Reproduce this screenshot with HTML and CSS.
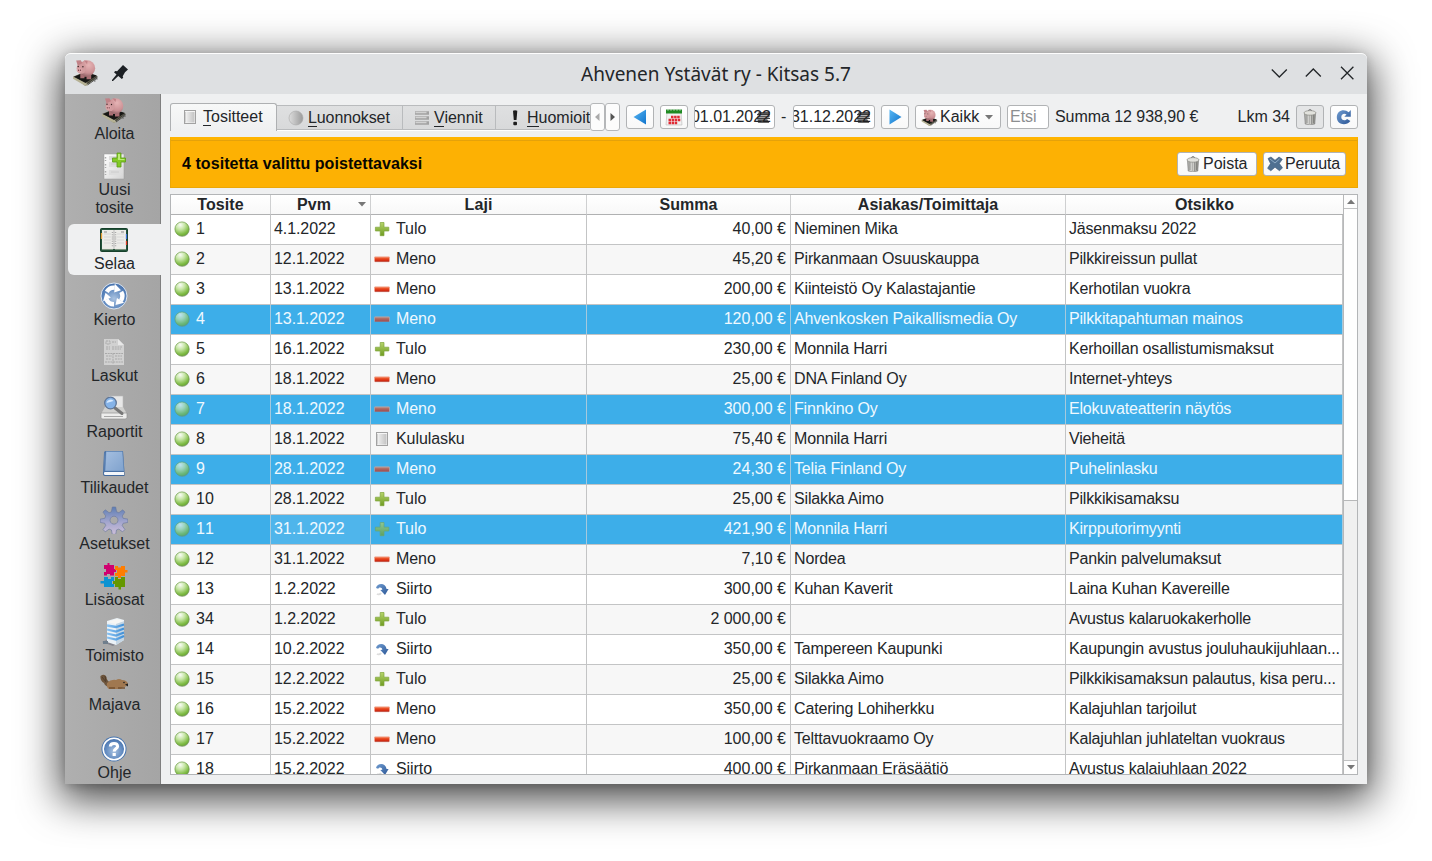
FILE: index.html
```
<!DOCTYPE html>
<html lang="fi">
<head>
<meta charset="utf-8">
<title>Ahvenen Ystävät ry - Kitsas 5.7</title>
<link rel="stylesheet" href="styles.css">
</head>
<body>
<svg class="defs" width="0" height="0">
  <defs>
    <radialGradient id="gBall" cx=".38" cy=".22" r=".8"><stop offset="0" stop-color="#fafdf6"/><stop offset=".4" stop-color="#c5e5a4"/><stop offset=".8" stop-color="#80bc46"/><stop offset="1" stop-color="#6aa832"/></radialGradient>
    <linearGradient id="gPlus" x2="0" y2="1"><stop offset="0" stop-color="#b5d46b"/><stop offset="1" stop-color="#6f9c22"/></linearGradient>
    <linearGradient id="gMinus" x2="0" y2="1"><stop offset="0" stop-color="#f4906a"/><stop offset=".4" stop-color="#ea4a20"/><stop offset="1" stop-color="#c81e0c"/></linearGradient>
    <linearGradient id="gSwap" x2="1" y2="1"><stop offset="0" stop-color="#6f9bd0"/><stop offset="1" stop-color="#2c5796"/></linearGradient>
    <linearGradient id="gPage" x2="1" y2="1"><stop offset="0" stop-color="#fff"/><stop offset="1" stop-color="#d4d4d4"/></linearGradient>
    <radialGradient id="gPig" cx=".6" cy=".3" r=".75"><stop offset="0" stop-color="#e6b4b5"/><stop offset=".65" stop-color="#cb9094"/><stop offset="1" stop-color="#8d6064"/></radialGradient>
    <radialGradient id="gBlue" cx=".5" cy=".6" r=".6"><stop offset="0" stop-color="#a9c2e0"/><stop offset=".7" stop-color="#5c86bd"/><stop offset="1" stop-color="#416ca8"/></radialGradient>
    <linearGradient id="gGear" x2="0" y2="1"><stop offset="0" stop-color="#5e7eb4"/><stop offset=".6" stop-color="#a9a9cf"/><stop offset="1" stop-color="#cdbfd8"/></linearGradient>
    <linearGradient id="gArrow" x2="1" y2="1"><stop offset="0" stop-color="#58b7f3"/><stop offset="1" stop-color="#0f73cc"/></linearGradient>
    <linearGradient id="gCan" x2="1" y2="0"><stop offset="0" stop-color="#9c9c98"/><stop offset=".4" stop-color="#eeeeea"/><stop offset="1" stop-color="#85857f"/></linearGradient>
    <linearGradient id="gGrey" x2="1" y2="0"><stop offset="0" stop-color="#ddd"/><stop offset="1" stop-color="#9a9a9a"/></linearGradient>
    <linearGradient id="gBook" x2="1" y2="1"><stop offset="0" stop-color="#a5bfe0"/><stop offset="1" stop-color="#7fa2cd"/></linearGradient>
    <linearGradient id="gTower" x2="1" y2="0"><stop offset="0" stop-color="#8bc3f2"/><stop offset="1" stop-color="#3f8ed6"/></linearGradient>
  </defs>
  <symbol id="ball" viewBox="0 0 16 16"><ellipse cx="8.5" cy="8.8" rx="7" ry="7" fill="#777" opacity=".5"/><circle cx="8" cy="8" r="7.100" fill="url(#gBall)" stroke="#6c9c46" stroke-width=".7"/></symbol>
  <symbol id="plus" viewBox="0 0 16 16"><path d="M6.2 1.5h3.8v4.700h4.800v3.800h-4.800v4.700h-3.800v-4.700h-4.800v-3.800h4.800z" fill="url(#gPlus)" stroke="#7fa53b" stroke-width=".7"/></symbol>
  <symbol id="minus" viewBox="0 0 16 16"><rect x=".5" y="5.800" width="15" height="4.700" rx=".5" fill="url(#gMinus)" stroke="#f0a898" stroke-width=".6"/><path d="M1 10.600h14" stroke="#a82010" stroke-width=".6"/></symbol>
  <symbol id="swap" viewBox="0 0 16 16"><path d="M3 13c1 .6 3 .5 4-1" stroke="#ddd" stroke-width="2" fill="none"/><path d="M2 7C3 2 11.500 1 12.600 8h2L11 14 6.300 9l2-.3C8.200 6 5 5.600 4.200 7.800z" fill="url(#gSwap)"/></symbol>
  <symbol id="doc" viewBox="0 0 16 16"><rect x="2.500" y="1.500" width="11" height="13" fill="#f6f6f6" stroke="#a2a2a2"/><path d="M5 3h7.500v10.500H5z" fill="url(#gGrey)" opacity=".55"/><path d="M3.700 3v10.500" stroke="#bbb" stroke-width=".8"/></symbol>
  <symbol id="pig" viewBox="0 0 26 26">
    <path d="M1 17 13 12l12 5-12 9z" fill="#605e4c"/><path d="M1 17v2l12 7 2-1v-2z" fill="#b5b194"/><path d="M2 17l11-4.500L24 16l-11 7z" fill="#171715"/><path d="M14 24l10-7M15 25l9-6.500" stroke="#34342e" stroke-width=".8"/><path d="M22 18v4M24 17v3" stroke="#555" stroke-width=".8"/>
    <path d="M8 14v4.500h4V17h2v2.500h4.500V14z" fill="#a96f74"/>
    <ellipse cx="14.500" cy="9" rx="7.800" ry="7.800" fill="url(#gPig)"/><ellipse cx="9" cy="9" rx="4.500" ry="5.300" fill="#d29b9e"/>
    <path d="M4 1.500l4.500-.3 1.500 3-4.500 2zM11.500 1.200l3.500.8-.5 3z" fill="#c18287"/><ellipse cx="7.200" cy="10.800" rx="2.600" ry="2.200" fill="#dca6a9"/><circle cx="6.300" cy="10.800" r=".6" fill="#653038"/><circle cx="8.200" cy="10.800" r=".6" fill="#653038"/><circle cx="6" cy="7.300" r=".7" fill="#302020"/><circle cx="10.500" cy="7.500" r=".7" fill="#302020"/>
  </symbol>
  <symbol id="newdoc" viewBox="0 0 26 28"><path d="M3 2h20v25H3z" fill="url(#gPage)" stroke="#999" stroke-width=".5"/><path d="M4.500 5v4m0 3v4m0 3v4" stroke="#aaa" stroke-width="1.500" stroke-dasharray="1.500 1.500"/><path d="M8 4h8v4H8zM8 10h10v5H8zM8 18h12v5H8z" fill="#ddd"/><path d="M10 6h6M10 12h6M10 20h8" stroke="#ccc"/><path d="M16 1h4v5h4.500v4H20v5h-4v-5h-4.500V6H16z" fill="#83ca27" stroke="#5b9b18" stroke-width=".8"/><path d="M17 2h2v5h4.500v1H17z" fill="#bdec77"/></symbol>
  <symbol id="ledger" viewBox="0 0 28 26"><rect x=".5" y="1.500" width="27" height="23" rx="1" fill="#24543c" stroke="#16402b"/><path d="M2 3h24v19H2z" fill="#ecece8"/><path d="M14 3v19" stroke="#bbb"/><path d="M12.500 5v15M15.500 5v15" stroke="#aaa" stroke-width="1.500" stroke-dasharray="1 1.200"/><path d="M4 7h7M4 10h7M4 13h7M4 16h7M17 7h7M17 10h7M17 13h7M17 16h7" stroke="#d2d2d2" stroke-width=".8"/><path d="M4 5h3M21 5h3" stroke="#888"/><path d="M1.500 6v6" stroke="#e8a13a" stroke-width="1.300"/><path d="M26.500 7v5" stroke="#3d72d6" stroke-width="1.300"/><path d="M26.500 14v4" stroke="#e13b26" stroke-width="1.300"/><path d="M2 22.300h11M15 22.300h11" stroke="#d8d8c8" stroke-width=".6"/></symbol>
  <symbol id="cycle" viewBox="0 0 28 28"><circle cx="14" cy="14" r="13" fill="url(#gBlue)" stroke="#dce5f0" stroke-width="1"/><g id="arm"><path d="M6.800 9.850A8.300 8.300 0 0 1 14.700 5.700" fill="none" stroke="#fff" stroke-width="4.400"/><path d="M14.800 1.800l6.200 6.400-6.800 2.300z" fill="#fff"/></g><use href="#arm" transform="rotate(120 14 14)"/><use href="#arm" transform="rotate(240 14 14)"/></symbol>
  <symbol id="invoice" viewBox="0 0 26 28"><path d="M3 1h14l6 6v20H3z" fill="#d1d1d1"/><path d="M17 1l6 6h-6z" fill="#e7e7e7"/><path d="M5 3h4v3H5zM11 4h4M5 9h4M11 9h10M11 11h9M5 11h4M4 15.500h18M12 15.500V26M5 18h6M14 18h7M5 21h5M14 21h7M4 24h18" stroke="#a9a9a9" fill="none" stroke-dasharray="2 .7"/></symbol>
  <symbol id="report" viewBox="0 0 28 28"><path d="M9 2h14v13H7z" fill="#e7e7e7" stroke="#bbb" stroke-width=".6"/><path d="M5 13h18l4 7v4H1v-4z" fill="#d1d1cf"/><path d="M1 19h26v5q-1 1-2 1H3q-2 0-2-1z" fill="#ededec" stroke="#929292" stroke-width=".7"/><path d="M4 22.500h19" stroke="#a8a8a8"/><path d="M15 14l7 5.500" stroke="#777" stroke-width="3" stroke-linecap="round"/><circle cx="10.500" cy="9" r="5.800" fill="#85b3e8" stroke="#5f7697" stroke-width="1.300"/><path d="M6.500 9a4 4 0 0 1 7-2" fill="#d8eaff"/></symbol>
  <symbol id="book" viewBox="0 0 26 28"><path d="M3 3q0-2 2-2h17l1.500 22v3H4q-2 0-2-2z" fill="#41699e"/><path d="M5 1.500h16.500L23 21H4z" fill="url(#gBook)" stroke="#6288b9" stroke-width=".5"/><path d="M3.500 22H23v3H4q-2-1-.5-3z" fill="#f3f6fa"/><path d="M3.800 2.500L3 22" stroke="#5d83b4"/></symbol>
  <symbol id="gear" viewBox="0 0 28 28"><g fill="url(#gGear)" stroke="#66759c" stroke-width=".6"><path d="M12.300 1h3.400l.9 4.800 2.300.9 3.800-2.900 2.200 2.300-2.700 3.900.9 2.300 4.700.8v3.300l-4.700.9-.9 2.300 2.700 3.900-2.300 2.300-3.800-2.700-2.300.9-.8 4.300h-3.400l-.9-4.300-2.300-.9-3.800 2.700-2.300-2.300 2.700-3.900-.9-2.300-4.600-.9v-3.300l4.600-.8.9-2.300L3 6.100l2.300-2.300 3.800 2.900 2.300-.9zM14 10.200a4 4 0 1 0 .01 0z" fill-rule="evenodd"/></g></symbol>
  <symbol id="puzzle" viewBox="0 0 28 28"><path d="M4 3h3.500V1h2v2H14v4h2v3h-2v3.500h-4V12H7v1.500H4V10h2V7H4z" fill="#d0006f"/><path d="M15 4h3v1.500h3V4h4v4h2.500v2.500H25V14h-4v2h-3v-2h-3v-3h2V8h-2z" fill="#ff7d00"/><path d="M4 15h4v2h3v-2h3v4h-2v3h2v3H4v-3.500H.5V19H4z" fill="#0b93d2"/><path d="M15 15h3v2h3v-2h4v10h-4v2.500h-2.500V25H15v-3h-2v-3h2z" fill="#659800"/></symbol>
  <symbol id="tower" viewBox="0 0 26 28"><path d="M1 24l9-4 8 4-6 4z" fill="#667" opacity=".55"/><path d="M6 3l10-3 7 2v20l-8 5-9-3z" fill="#eaf1f6"/><path d="M15 5l8-2v19l-8 5z" fill="#c5d6e4"/><path d="M6 4l9 2 8-3-7-2z" fill="#f6f6f4"/><path d="M6 7.500l9 1.500 8-2.500M6 11.500l9 2 8-3M6 15.500l9 2 8-3M6 19.500l9 2 8-3.500" fill="none" stroke="url(#gTower)" stroke-width="2.300"/><path d="M2 23h5v3H2z" fill="#6f7e8c"/></symbol>
  <symbol id="beaver" viewBox="0 0 28 17"><path d="M.5 2q4-3 6 1 0 5 6 6l-1 4Q5 13 4 9 0 7 .5 2z" fill="#6c543b"/><path d="M2 3l4 5M5 2l1 5" stroke="#49372a" stroke-width=".8"/><path d="M7 9q4-4 9-3 3-2 6 0 5 0 6 4-1 3-5 3l-2 2H9q-3-2-2-6z" fill="#a07850"/><path d="M9 14h6M18 14h7" stroke="#74502f" stroke-width="1.500"/><circle cx="24" cy="8.500" r=".8" fill="#222"/><path d="M25 10.500l3-1v3z" fill="#222"/></symbol>
  <symbol id="help" viewBox="0 0 28 28"><circle cx="14" cy="14" r="12.500" fill="#4674b0"/><circle cx="14" cy="14" r="10.800" fill="url(#gBlue)" stroke="#fff" stroke-width="1.500"/><path d="M10.300 11.500Q10.500 8.500 14 8.500t3.600 2.900c0 2-3.400 2.300-3.400 5" stroke="#fff" stroke-width="3" fill="none"/><rect x="12.600" y="18" width="3.200" height="3" fill="#fff"/></symbol>
  <symbol id="can" viewBox="0 0 16 16"><path d="M2.500 4h11l-.7 11q-4.800 1.600-9.600 0z" fill="url(#gCan)" stroke="#777" stroke-width=".6"/><path d="M5 6v8M7.200 6v9M9.400 6v9M11.400 6v8" stroke="#666" stroke-width=".8" opacity=".7"/><ellipse cx="8" cy="3.900" rx="6" ry="2.300" fill="#e2e2dd" stroke="#8a8a84" stroke-width=".7"/><path d="M6.500 2q0-1.500 1.500-1.500T9.500 2" stroke="#888" fill="none"/></symbol>
  <symbol id="reload" viewBox="0 0 16 16"><path d="M14.800 1v6.800H8.300l2.200-2.300C8 3.800 5.300 5.200 5.300 8.200c0 3.100 3.700 4.200 5.800 1.700l3.300 2C9.800 17.800.8 15.300.8 8.200.8 1.200 8.400-.8 12.700 3.200z" fill="url(#gSwap)"/></symbol>
  <symbol id="cross" viewBox="0 0 16 16"><path d="M1 2.500 4 1 8 4.300 12 1l3.300 2.300L12.300 7.500l3.200 4.300-3 3L8 11.200l-4.200 3.600-3.200-2.500L3.500 7.600z" fill="#4f7091" stroke="#3b5878" stroke-width=".6"/><path d="M3 3l5 4 4.500-4" stroke="#8eabc6" fill="none"/></symbol>
  <symbol id="calendar" viewBox="0 0 18 18"><path d="M2 4h14l1 13H1z" fill="#f1f1f1" stroke="#bbb" stroke-width=".6"/><path d="M1 1.500h16v4H1z" fill="#1f8a22"/><path d="M3 .8v2M6 .8v2M9 .8v2M12 .8v2M15 .8v2" stroke="#d7e4d3" stroke-width=".8"/><path d="M6 9h9.400M3.500 12h12M3.500 15h9" stroke="#e02b35" stroke-width="2.300" stroke-dasharray="2.500 .6"/></symbol>
  <symbol id="sheet" viewBox="0 0 16 14"><path d="M3 1h12l-1 3H1zM2 5h13l-1 2H1zM1 9h11l2 3H3z" fill="#222" opacity=".75"/><path d="M1 4h14M1 8h14M2 12h12" stroke="#222"/></symbol>
  <symbol id="tri" viewBox="0 0 8 5"><path d="M0 0h8L4 4.500z" fill="#777"/></symbol>
</svg>

<div class="window">
  <header class="titlebar">
    <svg class="title-pig"><use href="#pig"/></svg>
    <svg class="pin" viewBox="0 0 16 16"><path d="M11 0l5 4.500-3 2.800-2.300 3.900.5 1.600-1.400 1.300-3.500-3L1 16H0v-1l4.500-5.500L2 7.200l1.300-1.300 1.800.3z" fill="#1c2024"/></svg>
    <h1>Ahvenen Ystävät ry - Kitsas 5.7</h1>
    <svg class="wm" viewBox="0 0 84 16"><path d="M.8 4.500 8.300 12l7.500-7.500M34.800 11.500 42.300 4l7.500 7.500M70 1.800l12.400 12.400M82.400 1.800 70 14.200" fill="none" stroke="#232629" stroke-width="1.300"/></svg>
  </header>
  <div class="body">
    <nav class="sidebar">
      <a class="item"><svg><use href="#pig"/></svg>Aloita</a>
      <a class="item"><svg><use href="#newdoc"/></svg>Uusi<br>tosite</a>
      <a class="item active"><svg><use href="#ledger"/></svg>Selaa</a>
      <a class="item"><svg><use href="#cycle"/></svg>Kierto</a>
      <a class="item"><svg><use href="#invoice"/></svg>Laskut</a>
      <a class="item"><svg><use href="#report"/></svg>Raportit</a>
      <a class="item"><svg><use href="#book"/></svg>Tilikaudet</a>
      <a class="item"><svg><use href="#gear"/></svg>Asetukset</a>
      <a class="item"><svg><use href="#puzzle"/></svg>Lisäosat</a>
      <a class="item"><svg><use href="#tower"/></svg>Toimisto</a>
      <a class="item low"><svg><use href="#beaver"/></svg>Majava</a>
      <a class="item last"><svg><use href="#help"/></svg>Ohje</a>
    </nav>
    <main class="main">
      <div class="toolbar">
        <div class="tabs">
          <div class="tab on"><svg><use href="#doc"/></svg><span><u>T</u>ositteet</span></div>
          <div class="tab t2"><svg viewBox="0 0 16 16"><circle cx="8" cy="8" r="7" fill="url(#gGrey)" stroke="#aaa" stroke-width=".6"/></svg><span><u>L</u>uonnokset</span></div>
          <div class="tab t3"><svg viewBox="0 0 16 16"><path d="M1 3h14M1 8h14M1 13h14" stroke="#a2a2a2" stroke-width="3.500"/><path d="M1.500 2.500h11M1.500 7.500h11M1.500 12.500h11" stroke="#d2d2d2" stroke-width="1.500"/></svg><span><u>V</u>iennit</span></div>
          <div class="tab t4"><svg viewBox="0 0 16 16"><path d="M6 .8q2-1 4.300 0L9.500 10H6.800z" fill="#1c1c1c"/><rect x="6.300" y="11.700" width="3.700" height="3.500" rx="1" fill="#1c1c1c"/></svg><span><u>H</u>uomioita</span></div>
          <div class="scroller"><svg viewBox="0 0 5 8"><path d="M4.500 0v8L0 4z" fill="#aaa"/></svg></div>
          <div class="scroller"><svg viewBox="0 0 5 8"><path d="M.5 0v8L5 4z" fill="#555"/></svg></div>
        </div>
        <div class="btn sq"><svg viewBox="0 0 16 16"><path d="M14 .5v15L1.500 8z" fill="url(#gArrow)"/></svg></div>
        <div class="btn sq"><svg class="cal"><use href="#calendar"/></svg></div>
        <div class="date"><span>01.01.2022</span><svg><use href="#sheet"/></svg></div>
        <span class="dash">-</span>
        <div class="date d2"><span>31.12.2022</span><svg><use href="#sheet"/></svg></div>
        <div class="btn sq"><svg viewBox="0 0 16 16"><path d="M2.500.5v15L14.500 8z" fill="url(#gArrow)"/></svg></div>
        <div class="btn combo"><svg><use href="#pig"/></svg>Kaikk<svg class="tri"><use href="#tri"/></svg></div>
        <div class="search">Etsi</div>
        <span class="total">Summa 12 938,90 €</span>
        <span class="count">Lkm 34</span>
        <div class="btn sq down"><svg><use href="#can"/></svg></div>
        <div class="btn sq"><svg><use href="#reload"/></svg></div>
      </div>
      <div class="banner">
        <strong>4 tositetta valittu poistettavaksi</strong>
        <div class="btn del"><svg><use href="#can"/></svg>Poista</div>
        <div class="btn cancel"><svg><use href="#cross"/></svg>Peruuta</div>
      </div>
      <div class="grid">
        <div class="view">
          <table>
            <colgroup><col class="c1"><col class="c2"><col class="c3"><col class="c4"><col class="c5"><col class="c6"></colgroup>
            <thead><tr><th>Tosite</th><th class="sorted">Pvm<svg class="tri"><use href="#tri"/></svg></th><th>Laji</th><th>Summa</th><th>Asiakas/Toimittaja</th><th>Otsikko</th></tr></thead>
            <tbody>
              <tr><td><svg><use href="#ball"/></svg>1</td><td>4.1.2022</td><td><svg><use href="#plus"/></svg>Tulo</td><td>40,00 €</td><td>Nieminen Mika</td><td>Jäsenmaksu 2022</td></tr>
              <tr><td><svg><use href="#ball"/></svg>2</td><td>12.1.2022</td><td><svg><use href="#minus"/></svg>Meno</td><td>45,20 €</td><td>Pirkanmaan Osuuskauppa</td><td>Pilkkireissun pullat</td></tr>
              <tr><td><svg><use href="#ball"/></svg>3</td><td>13.1.2022</td><td><svg><use href="#minus"/></svg>Meno</td><td>200,00 €</td><td>Kiinteistö Oy Kalastajantie</td><td>Kerhotilan vuokra</td></tr>
              <tr class="sel"><td><svg><use href="#ball"/></svg>4</td><td>13.1.2022</td><td><svg><use href="#minus"/></svg>Meno</td><td>120,00 €</td><td>Ahvenkosken Paikallismedia Oy</td><td>Pilkkitapahtuman mainos</td></tr>
              <tr><td><svg><use href="#ball"/></svg>5</td><td>16.1.2022</td><td><svg><use href="#plus"/></svg>Tulo</td><td>230,00 €</td><td>Monnila Harri</td><td>Kerhoillan osallistumismaksut</td></tr>
              <tr><td><svg><use href="#ball"/></svg>6</td><td>18.1.2022</td><td><svg><use href="#minus"/></svg>Meno</td><td>25,00 €</td><td>DNA Finland Oy</td><td>Internet-yhteys</td></tr>
              <tr class="sel"><td><svg><use href="#ball"/></svg>7</td><td>18.1.2022</td><td><svg><use href="#minus"/></svg>Meno</td><td>300,00 €</td><td>Finnkino Oy</td><td>Elokuvateatterin näytös</td></tr>
              <tr><td><svg><use href="#ball"/></svg>8</td><td>18.1.2022</td><td><svg><use href="#doc"/></svg>Kululasku</td><td>75,40 €</td><td>Monnila Harri</td><td>Vieheitä</td></tr>
              <tr class="sel"><td><svg><use href="#ball"/></svg>9</td><td>28.1.2022</td><td><svg><use href="#minus"/></svg>Meno</td><td>24,30 €</td><td>Telia Finland Oy</td><td>Puhelinlasku</td></tr>
              <tr><td><svg><use href="#ball"/></svg>10</td><td>28.1.2022</td><td><svg><use href="#plus"/></svg>Tulo</td><td>25,00 €</td><td>Silakka Aimo</td><td>Pilkkikisamaksu</td></tr>
              <tr class="sel"><td><svg><use href="#ball"/></svg>11</td><td class="focus">31.1.2022</td><td><svg><use href="#plus"/></svg>Tulo</td><td>421,90 €</td><td>Monnila Harri</td><td>Kirpputorimyynti</td></tr>
              <tr><td><svg><use href="#ball"/></svg>12</td><td>31.1.2022</td><td><svg><use href="#minus"/></svg>Meno</td><td>7,10 €</td><td>Nordea</td><td>Pankin palvelumaksut</td></tr>
              <tr><td><svg><use href="#ball"/></svg>13</td><td>1.2.2022</td><td><svg><use href="#swap"/></svg>Siirto</td><td>300,00 €</td><td>Kuhan Kaverit</td><td>Laina Kuhan Kavereille</td></tr>
              <tr><td><svg><use href="#ball"/></svg>34</td><td>1.2.2022</td><td><svg><use href="#plus"/></svg>Tulo</td><td>2 000,00 €</td><td></td><td>Avustus kalaruokakerholle</td></tr>
              <tr><td><svg><use href="#ball"/></svg>14</td><td>10.2.2022</td><td><svg><use href="#swap"/></svg>Siirto</td><td>350,00 €</td><td>Tampereen Kaupunki</td><td>Kaupungin avustus jouluhaukijuhlaan...</td></tr>
              <tr><td><svg><use href="#ball"/></svg>15</td><td>12.2.2022</td><td><svg><use href="#plus"/></svg>Tulo</td><td>25,00 €</td><td>Silakka Aimo</td><td>Pilkkikisamaksun palautus, kisa peru...</td></tr>
              <tr><td><svg><use href="#ball"/></svg>16</td><td>15.2.2022</td><td><svg><use href="#minus"/></svg>Meno</td><td>350,00 €</td><td>Catering Lohiherkku</td><td>Kalajuhlan tarjoilut</td></tr>
              <tr><td><svg><use href="#ball"/></svg>17</td><td>15.2.2022</td><td><svg><use href="#minus"/></svg>Meno</td><td>100,00 €</td><td>Telttavuokraamo Oy</td><td>Kalajuhlan juhlateltan vuokraus</td></tr>
              <tr><td><svg><use href="#ball"/></svg>18</td><td>15.2.2022</td><td><svg><use href="#swap"/></svg>Siirto</td><td>400,00 €</td><td>Pirkanmaan Eräsäätiö</td><td>Avustus kalajuhlaan 2022</td></tr>
            </tbody>
          </table>
        </div>
        <div class="scrollbar">
          <div class="arrow"><svg class="tri up"><use href="#tri"/></svg></div>
          <div class="thumb"></div>
          <div class="arrow end"><svg class="tri"><use href="#tri"/></svg></div>
        </div>
      </div>
    </main>
  </div>
</div>
</body>
</html>
```
FILE: styles.css
```
* { box-sizing: border-box; }
html, body { height: 100%; }
body {
  margin: 0;
  padding: 53px 65px 77px;
  background: #fff;
  overflow: hidden;
  font: 16px/18px "Liberation Sans", Arial, sans-serif;
  color: #232629;
}
svg { display: block; flex: none; }
.defs { position: absolute; }

.window {
  width: 1302px;
  height: 731px;
  display: flex;
  flex-direction: column;
  border-radius: 6px 6px 0 0;
  background: #eff0f1;
  box-shadow: 0 11px 40px 5px rgba(0, 0, 0, .72), 0 2px 10px rgba(0, 0, 0, .15);
}
.titlebar {
  flex: none;
  height: 41px;
  display: flex;
  align-items: center;
  padding: 0 12px 2px 7px;
  background: #dee0e2;
  border-top: 1px solid #fdfdfd;
  border-radius: 6px 6px 0 0;
}
.title-pig { width: 27px; height: 27px; margin-top: -1px; }
.pin { width: 16px; height: 16px; margin-left: 13px; margin-top: -1px; }
.titlebar h1 {
  flex: 1;
  margin: 2px 0 0 33px;
  text-align: center;
  font: 400 19px/24px "Noto Sans", sans-serif;
}
.wm { width: 84px; height: 16px; }

.body { flex: 1; display: flex; min-height: 0; }
.sidebar {
  flex: none;
  width: 96px;
  display: flex;
  flex-direction: column;
  gap: 5px;
  padding-left: 3px;
  background: linear-gradient(90deg, #afafaf, #a5a5a5);
  border-right: 1px solid #7f7f7f;
}
.item {
  display: flex;
  flex-direction: column;
  align-items: center;
  text-align: center;
  padding: 2px 0 2px 1px;
}
.item svg { width: 28px; height: 28px; margin: 0 1px 1px 0; }
.item:first-child svg { width: 26px; }
.item.active {
  background: #eff0f1;
  border-radius: 6px 0 0 6px;
  margin-right: -1px;
  padding-right: 1px;
}
.item.low { padding-bottom: 4px; }
.item.low svg { height: 17px; margin-bottom: 5px; }
.item.last { margin-top: 10px; }

.main {
  flex: 1;
  min-width: 0;
  display: flex;
  flex-direction: column;
  padding: 9px 9px 9px 9px;
}
.toolbar { height: 28px; display: flex; align-items: center; gap: 6px; white-space: nowrap; }
.tabs {
  width: 450px;
  height: 28px;
  display: flex;
  align-items: center;
  overflow: hidden;
}
.tab {
  flex: none;
  height: 25px;
  display: flex;
  align-items: center;
  gap: 4px;
  margin-top: 1px;
  background: linear-gradient(#dfe0e1, #d8d9da);
  border: solid #b9bbbd;
  border-width: 1px 1px 1px 0;
  box-shadow: 0 1px #fff;
  overflow: hidden;
}
.tab svg { width: 16px; height: 16px; }
.tab u { text-decoration: none; border-bottom: 1px solid #232629; }
.tab.on {
  width: 107px;
  height: 28px;
  margin: 0;
  gap: 5px;
  padding: 0 0 1px 11px;
  background: linear-gradient(#f7f8f8, #eff0f1);
  border: solid #aeb0b2;
  border-width: 1px 1px 0;
  border-radius: 3px 3px 0 0;
  box-shadow: none;
}
.t2 { width: 126px; padding-left: 11px; letter-spacing: -.1px; }
.t3 { width: 93px; padding-left: 11px; }
.t4 { width: 94px; padding-left: 11px; border-right: 0; }
.scroller {
  flex: none;
  width: 15px;
  height: 28px;
  display: flex;
  align-items: center;
  justify-content: center;
  background: #fcfcfc;
  border: 1px solid #b5b7b9;
  border-radius: 3px;
}
.scroller svg { width: 5px; height: 8px; }

.btn {
  flex: none;
  height: 24px;
  display: flex;
  align-items: center;
  background: linear-gradient(#fff, #f8f8f8);
  border: 1px solid #b1b3b5;
  border-radius: 3px;
}
.btn svg { width: 16px; height: 16px; }
.btn .cal { width: 18px; height: 18px; }
.btn.sq { width: 28px; justify-content: center; }
.btn.down { background: #e4e5e6; }
.date {
  position: relative;
  flex: none;
  width: 81px;
  height: 24px;
  display: flex;
  justify-content: flex-end;
  align-items: center;
  padding-right: 3px;
  background: #fff;
  border: 1px solid #b1b3b5;
  border-radius: 3px;
  overflow: hidden;
}
.date.d2 { width: 82px; }
.date svg { position: absolute; right: 3px; top: 5px; width: 15px; height: 13px; }
.dash { width: 6px; }
.combo { width: 86px; padding-left: 5px; }
.btn.combo > svg:first-child { width: 17px; height: 17px; margin-right: 2px; }
.btn .tri, .tri { width: 8px; height: 5px; }
.combo .tri { margin-left: 6px; }
.search {
  width: 42px;
  height: 24px;
  padding: 2px 0 0 2px;
  color: #8c8e90;
  background: #fff;
  border: 1px solid #b1b3b5;
  border-radius: 3px;
}
.total { letter-spacing: -.05px; }
.count { margin-left: auto; }

.banner {
  flex: none;
  height: 51px;
  margin: 6px 0;
  display: flex;
  align-items: center;
  gap: 6px;
  padding: 0 11px;
  background: #fdb103;
  border: 1px solid #eba707;
  border-top: 3px solid #ffb400;
  box-shadow: inset 0 1px #e5a20a;
}
.banner strong { flex: 1; color: #080600; letter-spacing: .06px; }
.btn.del { width: 80px; padding-left: 7px; gap: 2px; }
.btn.cancel { width: 83px; padding-left: 3px; gap: 2px; letter-spacing: -.15px; }

.grid {
  flex: 1;
  min-height: 0;
  display: flex;
  border: 1px solid #b3b5b7;
  background: #fff;
}
.view { width: 1172px; overflow: hidden; }
table { width: 1172px; table-layout: fixed; border-collapse: separate; border-spacing: 0; }
.c1, .c2 { width: 100px; }
.c3 { width: 216px; }
.c4 { width: 204px; }
.c5 { width: 275px; }
.c6 { width: 277px; }
th {
  position: relative;
  height: 20px;
  padding: 0;
  line-height: 19px;
  background: linear-gradient(#fff, #f8f8f8);
  border-right: 1px solid #cfd0d1;
  border-bottom: 1px solid #b0b1b2;
  letter-spacing: .06px;
}
.sorted { padding-right: 13px; }
.sorted .tri { position: absolute; right: 4px; top: 7px; }
td {
  height: 30px;
  padding: 0 3px 1px;
  white-space: nowrap;
  overflow: hidden;
  border-right: 1px solid #c3c4c5;
  border-bottom: 1px solid #c3c4c5;
  letter-spacing: -.08px;
}
td:first-child { font-kerning: none; letter-spacing: 0; }
td:nth-child(4) { text-align: right; letter-spacing: 0; padding-right: 4px; }
td:nth-child(n+5) { letter-spacing: -.16px; }
td:nth-child(6) { letter-spacing: -.18px; }
th:last-child { border-right: 0; }
td svg { float: left; width: 16px; height: 16px; margin: 1px 6px 0 0; }
tr:nth-child(even) td { background: #f7f7f7; }
tr.sel td { background: #3daee9; color: #eff9ff; border-right-color: #a5c9dd; }
tr.sel td.focus { background: #4fb5eb; }
tr.sel svg { opacity: .68; }

.scrollbar {
  flex: 1;
  display: flex;
  flex-direction: column;
  background: #f0f0f0;
  border-left: 1px solid #b7b8b9;
}
.arrow {
  height: 14px;
  display: flex;
  align-items: center;
  justify-content: center;
  background: #fdfdfd;
  border-bottom: 1px solid #c0c1c2;
}
.arrow.end { margin-top: auto; border-top: 1px solid #c0c1c2; border-bottom: 0; }
.up { transform: scaleY(-1); }
.thumb { height: 292px; background: #fefefe; border-bottom: 1px solid #b7b8b9; }
```
